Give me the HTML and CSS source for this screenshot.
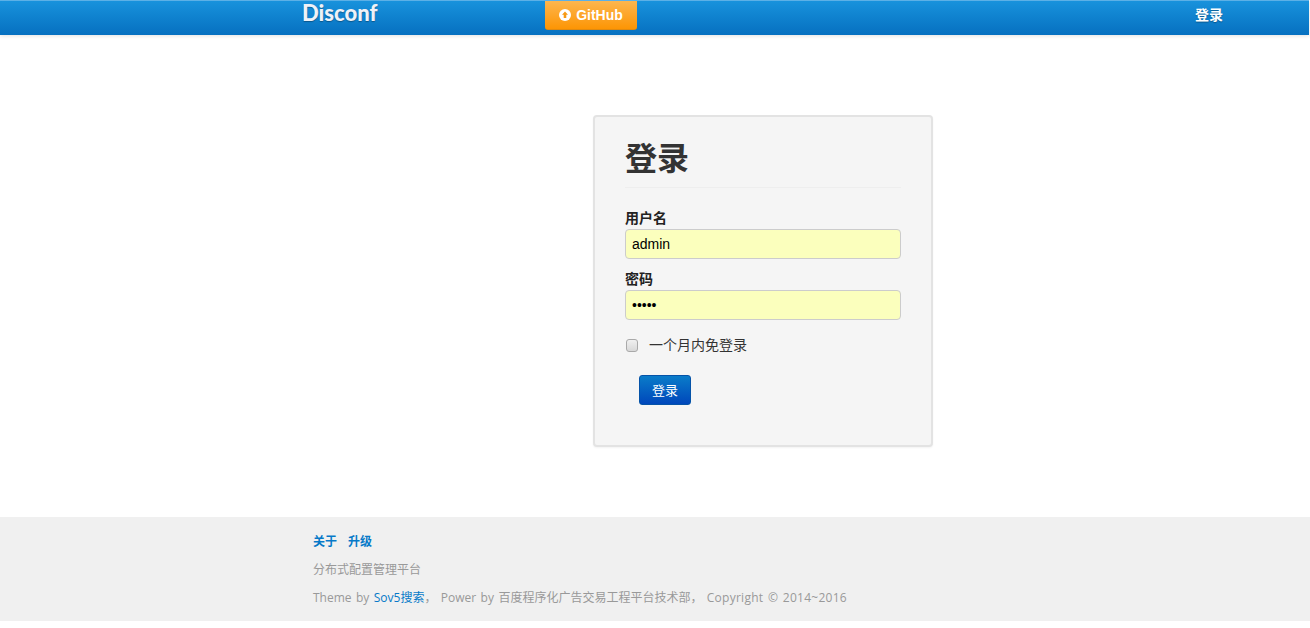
FILE: index.html
```html
<!DOCTYPE html>
<html lang="zh-CN">
<head>
<meta charset="utf-8">
<title>Disconf</title>
<link rel="stylesheet" href="styles.css">
</head>
<body>
<header class="navbar">
  <a class="brand" href="#">Disconf</a>
  <a class="github" href="#">
    <svg class="github-icon" viewBox="0 0 12 12" width="12" height="12" aria-hidden="true"><circle cx="6" cy="6" r="6" fill="#fff"/><path d="M6 2.4 9 5.7H7.3V9H4.7V5.7H3Z" fill="#f79a14"/></svg>
    GitHub
  </a>
  <a class="nav-login" href="#">登录</a>
</header>
<main class="content">
  <form class="card">
    <h1 class="card-title">登录</h1>
    <label class="field-label" for="user">用户名</label>
    <input class="field" id="user" type="text" value="admin">
    <label class="field-label field-label-second" for="pass">密码</label>
    <input class="field" id="pass" type="password" value="admin">
    <label class="remember"><span class="check"></span>一个月内免登录</label>
    <button class="submit" type="button">登录</button>
  </form>
</main>
<footer class="footer">
  <p class="footer-links"><a href="#">关于</a><a href="#">升级</a></p>
  <p class="footer-line">分布式配置管理平台</p>
  <p class="footer-line footer-credits">Theme by <a class="footer-link" href="#">Sov5搜索</a>， Power by 百度程序化广告交易工程平台技术部， <span class="copyright">Copyright © 2014~2016</span></p>
</footer>
</body>
</html>
```
FILE: styles.css
```css
* { box-sizing: border-box; }
html, body { margin: 0; padding: 0; background: #fff; }
body {
  font-family: "Liberation Sans", "Noto Sans CJK SC", sans-serif;
  font-size: 14px;
  color: #333;
  overflow: hidden;
  height: 628px;
}
a { text-decoration: none; }

.navbar {
  height: 35px;
  margin-right: 1px;
  display: flex;
  align-items: flex-start;
  padding-left: 302px;
  border-top: 1px solid #5cb0e6;
  background: linear-gradient(#1892dc, #0670c0);
  box-shadow: 0 1px 4px rgba(0, 0, 0, 0.12);
}
.brand {
  width: 243px;
  font-family: "Lato", "Liberation Sans", sans-serif;
  font-size: 22px;
  line-height: 24px;
  font-weight: 900;
  color: #eef1f7;
  text-shadow: 0 1px 1px rgba(0, 0, 0, 0.3);
}
.github {
  width: 92px;
  height: 29px;
  display: flex;
  align-items: center;
  justify-content: center;
  gap: 5px;
  border-radius: 0 0 3px 3px;
  border-bottom: 1px solid #e08a10;
  background: linear-gradient(#fdb64e, #fd9504);
  color: #fff;
  font-size: 14px;
  font-weight: bold;
}
.github-icon { flex: none; }
.nav-login {
  margin-left: 558px;
  margin-top: 6px;
  color: #fff;
  font-size: 14px;
  line-height: 17px;
  font-weight: bold;
  text-shadow: 0 1px 1px rgba(0, 0, 0, 0.3);
}

.content { padding: 80px 0 0 593px; height: 482px; }
.card {
  width: 340px;
  height: 332px;
  padding: 21px 30px 0;
  background: #f5f5f5;
  border: 2px solid #e3e3e3;
  border-radius: 4px;
  box-shadow: 0 1px 2px rgba(0, 0, 0, 0.05);
}
.card-title {
  margin: 0 0 21px;
  height: 50px;
  border-bottom: 1px solid #eeeeee;
  font-size: 32px;
  line-height: 42px;
  font-weight: bold;
  color: #333;
}
.field-label {
  display: block;
  height: 20px;
  font-size: 14px;
  line-height: 19px;
  font-weight: bold;
  color: #222;
}
.field-label-second { margin-top: 11px; }
.field {
  display: block;
  width: 276px;
  height: 30px;
  padding: 0 6px;
  border: 1px solid #cccccc;
  border-radius: 4px;
  background: #fbffbd;
  font-family: inherit;
  font-size: 14px;
  color: #000;
  outline: none;
}
.remember {
  display: flex;
  align-items: center;
  height: 20px;
  margin-top: 15px;
  font-size: 14px;
  line-height: 20px;
  color: #333;
}
.check {
  width: 12px;
  height: 13px;
  margin: 0 11px 0 1px;
  border: 1px solid #a9a9a9;
  border-radius: 3px;
  background: linear-gradient(#f0f0f0, #d8d8d8);
}
.submit {
  display: block;
  width: 52px;
  height: 30px;
  margin: 20px 0 0 14px;
  padding: 0 0 2px;
  border: 1px solid #0553a8;
  border-radius: 3px;
  background: linear-gradient(#0a7cc9, #0047bb);
  color: #fff;
  font-family: inherit;
  font-size: 13px;
}

.footer {
  height: 104px;
  padding: 15px 0 0 313px;
  background: #f0f0f0;
  color: #999;
  font-family: "Open Sans", "Noto Sans CJK SC", sans-serif;
  font-size: 12px;
}
.footer p { margin: 0; }
.footer-links { height: 28px; line-height: 20px; font-weight: bold; display: flex; gap: 11px; }
.footer-links a { color: #0679c8; }
.footer-line { height: 28px; line-height: 20px; }
.footer-credits { word-spacing: 1.3px; }
.copyright { letter-spacing: 0.25px; }
.footer-link { color: #0679c8; }
```
